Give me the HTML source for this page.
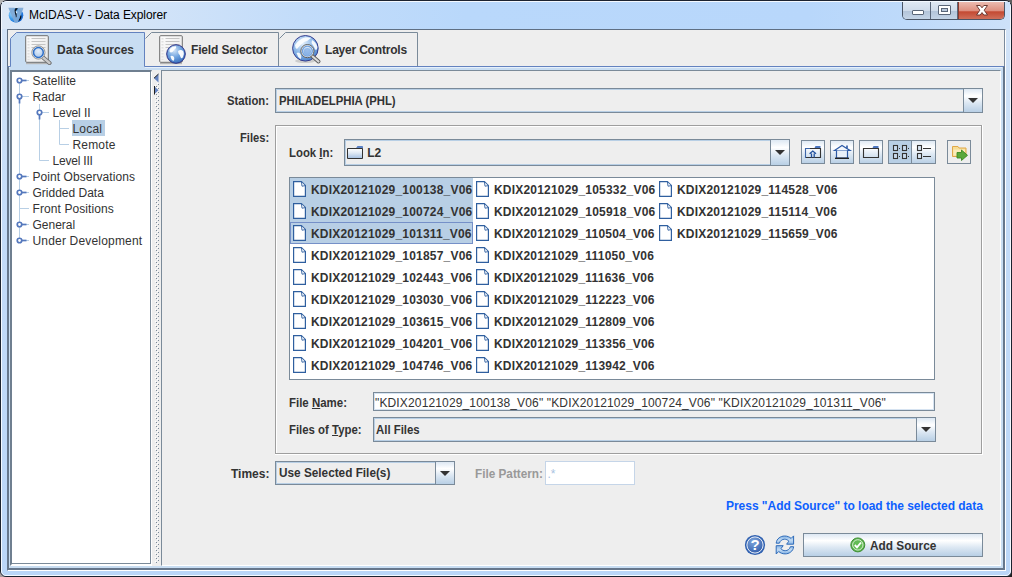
<!DOCTYPE html>
<html><head><meta charset="utf-8"><title>McIDAS-V - Data Explorer</title>
<style>
html,body{margin:0;padding:0}
body{width:1012px;height:577px;position:relative;overflow:hidden;background:#fff;font:bold 12px/14px "Liberation Sans",sans-serif;color:#333}
.a{position:absolute;box-sizing:border-box}
.t{position:absolute;white-space:nowrap;line-height:14px;height:14px;transform-origin:0 50%}
.p{font-weight:normal}
#frame{left:0;top:0;width:1012px;height:577px;border:1px solid #1c2330;border-radius:7px 7px 6px 6px;background:linear-gradient(180deg,#d4e4f7 0,#c3dbf8 40%,#bad6f8 100%)}
#tbar{left:2px;top:2px;width:1008px;height:27px;background:linear-gradient(90deg,#dce8f6 0%,#d3e4f8 14%,#c2dcfa 30%,#b9d8fb 46%,#b8d7fb 80%,#bedafa 90%,#cde1f9 100%)}
#frameHi{left:1px;top:1px;width:1010px;height:575px;border:1px solid #f4f9ff;border-radius:6px 6px 5px 5px}
#content{left:7px;top:29px;width:999px;height:542px;background:#eee;border-style:solid;border-color:#5f6f83 #fff #fff #5f6f83;border-width:1px}
.combo{border:1px solid #7a8a99;background:#eee;box-shadow:inset 1px 1px 0 #b8cfe5,inset -1px -1px 0 #b8cfe5}
.cbtn{position:absolute;right:0;top:0;bottom:0;width:18px;border-left:1px solid #7a8a99;background:linear-gradient(#dde8f3 0%,#fff 30%,#dde8f3 60%,#b8cfe5 100%)}
.cbtn:after{content:"";position:absolute;left:4px;top:var(--at,9px);border-left:5px solid transparent;border-right:5px solid transparent;border-top:5px solid #333}
.btn{border:1px solid #7a8a99;background:linear-gradient(#dde8f3 0%,#fff 30%,#dde8f3 60%,#b8cfe5 100%)}
</style></head><body>
<div class="a" style="left:0;top:0;width:8px;height:8px;background:#b4b4b4"></div><div class="a" style="right:0;top:0;width:8px;height:8px;background:#5e5e5e"></div><div class="a" style="left:0;bottom:0;width:8px;height:8px;background:#a89c9c"></div><div class="a" style="right:0;bottom:0;width:8px;height:8px;background:#222"></div>
<div class="a" id="frame"></div>
<div class="a" id="frameHi"></div>
<div class="a" id="tbar"></div>
<!-- title -->
<svg class="a" style="left:8px;top:6.5px" width="16" height="16" viewBox="0 0 16 16"><defs><radialGradient id="apg" cx="0.3" cy="0.35" r="0.8"><stop offset="0" stop-color="#b4e4fb"/><stop offset="0.5" stop-color="#3d9cec"/><stop offset="1" stop-color="#0f5fd0"/></radialGradient></defs><circle cx="8" cy="8.3" r="7.3" fill="url(#apg)"/><path d="M12.600 7.500 Q14.200 9 12.800 12 Q11.800 13.800 10 14.600 Q12 11.500 12.600 7.500 Z" fill="#0a0f18"/><path d="M0.400 0.800 H6.400 L8.100 9.500 L10 0.800 H15.400 L15.100 2.200 L9.700 15.600 H6.600 L0.900 2.200 Z" fill="#7ea9d6" opacity="0.93"/><path d="M7 1.600 Q9.600 0.300 9.800 1.800 Q8.400 3 7.800 4.400 Q9.200 7 8.600 9.800 Q7.600 11.500 7.800 9 Q7.200 7 6.800 5.500 Q6.300 3.300 7 1.600 Z" fill="#10151f"/><path d="M7.600 4.200 L9.400 4.800 L8.600 6.600 Q7.800 5.600 7.600 4.200 Z" fill="#e4f6ff"/></svg>
<div class="t p" id="title" style="left:29px;top:8px;color:#000;letter-spacing:-0.09px">McIDAS-V - Data Explorer</div>
<!-- window buttons -->
<div class="a" id="wb" style="left:902px;top:2px;width:103px;height:18px;border:1px solid #4a5566;border-top:none;border-radius:0 0 5px 5px;overflow:hidden">
 <div class="a" style="left:0;top:0;width:28px;height:19px;background:linear-gradient(#dfe8f3 0%,#cfdbea 45%,#b4c5da 50%,#c8d8ea 100%);border-right:1px solid #5a677a"></div>
 <div class="a" style="left:28px;top:0;width:27px;height:19px;background:linear-gradient(#dfe8f3 0%,#cfdbea 45%,#b4c5da 50%,#c8d8ea 100%);border-right:1px solid #5a677a"></div>
 <div class="a" style="left:55px;top:0;width:46px;height:19px;background:linear-gradient(#ecbbb0 0%,#de9080 45%,#c44a33 52%,#d27a66 100%);box-shadow:inset 1px 0 0 #8c3a2e"></div>
 <div class="a" style="left:9px;top:8px;width:12px;height:5px;background:#fff;border:1px solid #5a6678;border-radius:1px"></div>
 <div class="a" style="left:35px;top:3px;width:13px;height:10px;background:#fff;border:1px solid #5a6678;border-radius:1px"></div>
 <div class="a" style="left:38px;top:6px;width:7px;height:4px;background:#b9c8db;border:1px solid #5a6678"></div>
 <svg class="a" style="left:72px;top:3px" width="14" height="11" viewBox="0 0 14 11"><path d="M1.5 0.5 L5.2 0.5 L7 2.8 L8.800 0.5 L12.500 0.5 L9.200 5.2 L12.500 10 L8.800 10 L7 7.600 L5.200 10 L1.500 10 L4.800 5.200 Z" fill="#fff" stroke="#6d3a33" stroke-width="1"/></svg>
</div>
<div class="a" id="content"></div>
<div class="a" style="left:1004px;top:30px;width:1px;height:37px;background:#7b8a9c"></div>

<!-- tabbed pane -->
<div class="a" style="left:7px;top:66px;width:998px;height:504px;background:#c8ddf2;border-style:solid;border-color:#6382bf #66778c #66778c #66778c;border-width:1px 2px 2px 2px"></div>
<svg class="a" style="left:0;top:30px" width="1012" height="40" viewBox="0 30 1012 40">
 <path d="M10.5 67 L10.5 38.5 L16.5 32.5 L144.5 32.5 L144.5 67 Z" fill="#c8ddf2" stroke="none"/>
 <path d="M145.5 38.5 L151.5 32.5 L278.5 32.5 L278.5 66" fill="none" stroke="#7a8a99"/>
 <path d="M279.5 38.5 L285.5 32.5 L417.5 32.5 L417.5 66" fill="none" stroke="#7a8a99"/>
 <path d="M10.5 66.5 L10.5 38.5 L16.5 32.5 L144.5 32.5 L144.5 66.5" fill="none" stroke="#6382bf"/>
 <path d="M9 67.5 L10 67.5 M145 67.5 L1002 67.5" stroke="#e6f0fb" fill="none"/>
</svg>
<div class="t" style="left:57px;top:43px;letter-spacing:0.03px">Data Sources</div>
<div class="t" style="left:191px;top:43px;letter-spacing:-0.16px">Field Selector</div>
<div class="t" style="left:325px;top:43px;letter-spacing:-0.2px">Layer Controls</div>
<!-- tree panel -->
<div class="a" style="left:10px;top:70px;width:142px;height:496px;background:#fff;border-style:solid;border-color:#6f7f90 #fff #fff #6f7f90;border-width:2px 1px 2px 2px;box-shadow:inset -1px -1px 0 #7a8a99"></div>
<!-- divider -->
<div class="a" id="divider" style="left:152px;top:70px;width:9px;height:496px;background:#eee"></div>
<!-- tree -->
<svg class="a" style="left:12px;top:72px" width="138" height="180" viewBox="14 72 138 180">
<g stroke="#b8cfe5" fill="none">
<path d="M21.5 80 V240"/>
<path d="M21.5 80.5 H31 M21.5 96.5 H31 M21.5 176.5 H31 M21.5 192.5 H31 M21.5 208.5 H31 M21.5 224.5 H31 M21.5 240.5 H31"/>
<path d="M41.5 104 V160.5 H51 M41.5 112.5 H51"/>
<path d="M61.5 120 V144.5 H71 M61.5 128.5 H71"/>
</g>
<g stroke="#5578bd" stroke-width="1.7" fill="#fff">
<path d="M23.5 80.5 H28.5"/><circle cx="21.5" cy="80.5" r="2.25"/>
<path d="M21.5 98.5 V103.5"/><circle cx="21.5" cy="96.5" r="2.25"/>
<path d="M41.5 114.5 V119.5"/><circle cx="41.5" cy="112.5" r="2.25"/>
<path d="M23.5 176.5 H28.5"/><circle cx="21.5" cy="176.5" r="2.25"/>
<path d="M23.5 192.5 H28.5"/><circle cx="21.5" cy="192.5" r="2.25"/>
<path d="M23.5 224.5 H28.5"/><circle cx="21.5" cy="224.5" r="2.25"/>
<path d="M23.5 240.5 H28.5"/><circle cx="21.5" cy="240.5" r="2.25"/>
</g></svg>
<div class="a" style="left:72px;top:120px;width:33px;height:16px;background:#b8cfe5"></div>
<div class="t p" style="left:32.5px;top:74px;letter-spacing:0.1px">Satellite</div>
<div class="t p" style="left:32.5px;top:90px;letter-spacing:0.1px">Radar</div>
<div class="t p" style="left:52.5px;top:106px;letter-spacing:-0.1px">Level II</div>
<div class="t p" style="left:72.5px;top:122px;letter-spacing:0.2px">Local</div>
<div class="t p" style="left:72.5px;top:138px;letter-spacing:0.17px">Remote</div>
<div class="t p" style="left:52.5px;top:154px;letter-spacing:-0.2px">Level III</div>
<div class="t p" style="left:32.5px;top:170px;letter-spacing:0.06px">Point Observations</div>
<div class="t p" style="left:32.5px;top:186px;letter-spacing:0.0px">Gridded Data</div>
<div class="t p" style="left:32.5px;top:202px;letter-spacing:0.09px">Front Positions</div>
<div class="t p" style="left:32.5px;top:218px;letter-spacing:0.0px">General</div>
<div class="t p" style="left:32.5px;top:234px;letter-spacing:0.18px">Under Development</div>
<svg class="a" style="left:152px;top:70px" width="9" height="495" viewBox="0 0 9 495"><defs><pattern id="bump" x="3" y="3" width="4" height="4" patternUnits="userSpaceOnUse"><rect x="0" y="0" width="1" height="1" fill="#fff"/><rect x="1" y="1" width="1" height="1" fill="#7a8a99"/><rect x="2" y="2" width="1" height="1" fill="#fff"/><rect x="3" y="3" width="1" height="1" fill="#7a8a99"/></pattern></defs><rect x="3" y="3" width="4" height="490" fill="url(#bump)"/><rect x="1" y="3" width="6" height="10" fill="#eee"/><path d="M6.5 4 L6.5 12.5 L2 8.2 Z M2 16 L2 24.5 L6.5 20.2 Z" fill="#6382bf"/><path d="M6.5 4 L2 8.2 M2.5 16 V24.5" stroke="#222" fill="none"/></svg>
<!-- right panel -->
<div class="a" id="right" style="left:161px;top:70px;width:840px;height:496px;background:#eee;border-style:solid;border-width:1px;border-color:#7a8a99 #fff #fff #7a8a99"></div>
<!-- right panel content -->
<div class="t" style="left:227.3px;top:94px;transform:scaleX(0.94)">Station:</div>
<div class="a combo" style="left:275px;top:88px;width:708px;height:25px"><div class="cbtn"></div></div>
<div class="t" style="left:278.7px;top:94px;transform:scaleX(0.944)">PHILADELPHIA (PHL)</div>
<div class="t" style="left:240.3px;top:131px;transform:scaleX(0.93)">Files:</div>
<div class="a" style="left:275px;top:125px;width:708px;height:330px;border:1px solid #fff"></div>
<div class="a" style="left:275px;top:125px;width:707px;height:329px;border:1px solid #9e9e9e;box-shadow:inset 1px 1px 0 #fff"></div>
<div class="t" style="left:289px;top:146px;transform:scaleX(0.947)">Look <u>I</u>n:</div>
<div class="a combo" style="left:344px;top:139px;width:446px;height:27px;--at:10px"><div class="cbtn"></div></div>
<svg class="a" style="left:347px;top:146px" width="16" height="13" viewBox="0 0 16 13"><defs><linearGradient id="fg" x1="0" y1="0" x2="0" y2="1"><stop offset="0" stop-color="#fff"/><stop offset="0.45" stop-color="#dfe9f4"/><stop offset="1" stop-color="#a3bfe2"/></linearGradient></defs><path d="M9.500 2.500 L10.500 0.500 H15.500 V2.500 Z" fill="#5f86c9" stroke="#5a80c4" stroke-width="1"/><path d="M0.500 2.500 H15.500 V12.500 H0.500 Z" fill="url(#fg)" stroke="#333" stroke-width="1"/></svg>
<div class="t" style="left:367.2px;top:146px">L2</div>
<div class="a" style="left:289px;top:177px;width:646px;height:203px;background:#fff;border:1px solid #7a8a99"></div>
<div class="a" style="left:290px;top:178px;width:183px;height:66px;background:#b8cfe5"></div>
<div class="a" style="left:290px;top:222px;width:183px;height:22px;border:1px solid #7590c8"></div>
<svg width="0" height="0" style="position:absolute"><defs><g id="fi"><path d="M0.6 0.6 H8.4 L12.4 4.6 V15.4 H0.6 Z" fill="#fff" stroke="#2f5f9f" stroke-width="1.2"/><path d="M8.4 0.6 L12.4 4.6 L9 5.2 Z" fill="#fff" stroke="#2f5f9f" stroke-width="0.9"/></g></defs></svg>
<svg class="a" style="left:293px;top:181px" width="13" height="16"><use href="#fi"/></svg><div class="t" style="left:311px;top:183px;letter-spacing:0.2px">KDIX20121029_100138_V06</div>
<svg class="a" style="left:293px;top:203px" width="13" height="16"><use href="#fi"/></svg><div class="t" style="left:311px;top:205px;letter-spacing:0.2px">KDIX20121029_100724_V06</div>
<svg class="a" style="left:293px;top:225px" width="13" height="16"><use href="#fi"/></svg><div class="t" style="left:311px;top:227px;letter-spacing:0.2px">KDIX20121029_101311_V06</div>
<svg class="a" style="left:293px;top:247px" width="13" height="16"><use href="#fi"/></svg><div class="t" style="left:311px;top:249px;letter-spacing:0.2px">KDIX20121029_101857_V06</div>
<svg class="a" style="left:293px;top:269px" width="13" height="16"><use href="#fi"/></svg><div class="t" style="left:311px;top:271px;letter-spacing:0.2px">KDIX20121029_102443_V06</div>
<svg class="a" style="left:293px;top:291px" width="13" height="16"><use href="#fi"/></svg><div class="t" style="left:311px;top:293px;letter-spacing:0.2px">KDIX20121029_103030_V06</div>
<svg class="a" style="left:293px;top:313px" width="13" height="16"><use href="#fi"/></svg><div class="t" style="left:311px;top:315px;letter-spacing:0.2px">KDIX20121029_103615_V06</div>
<svg class="a" style="left:293px;top:335px" width="13" height="16"><use href="#fi"/></svg><div class="t" style="left:311px;top:337px;letter-spacing:0.2px">KDIX20121029_104201_V06</div>
<svg class="a" style="left:293px;top:357px" width="13" height="16"><use href="#fi"/></svg><div class="t" style="left:311px;top:359px;letter-spacing:0.2px">KDIX20121029_104746_V06</div>
<svg class="a" style="left:476px;top:181px" width="13" height="16"><use href="#fi"/></svg><div class="t" style="left:494px;top:183px;letter-spacing:0.2px">KDIX20121029_105332_V06</div>
<svg class="a" style="left:476px;top:203px" width="13" height="16"><use href="#fi"/></svg><div class="t" style="left:494px;top:205px;letter-spacing:0.2px">KDIX20121029_105918_V06</div>
<svg class="a" style="left:476px;top:225px" width="13" height="16"><use href="#fi"/></svg><div class="t" style="left:494px;top:227px;letter-spacing:0.2px">KDIX20121029_110504_V06</div>
<svg class="a" style="left:476px;top:247px" width="13" height="16"><use href="#fi"/></svg><div class="t" style="left:494px;top:249px;letter-spacing:0.2px">KDIX20121029_111050_V06</div>
<svg class="a" style="left:476px;top:269px" width="13" height="16"><use href="#fi"/></svg><div class="t" style="left:494px;top:271px;letter-spacing:0.2px">KDIX20121029_111636_V06</div>
<svg class="a" style="left:476px;top:291px" width="13" height="16"><use href="#fi"/></svg><div class="t" style="left:494px;top:293px;letter-spacing:0.2px">KDIX20121029_112223_V06</div>
<svg class="a" style="left:476px;top:313px" width="13" height="16"><use href="#fi"/></svg><div class="t" style="left:494px;top:315px;letter-spacing:0.2px">KDIX20121029_112809_V06</div>
<svg class="a" style="left:476px;top:335px" width="13" height="16"><use href="#fi"/></svg><div class="t" style="left:494px;top:337px;letter-spacing:0.2px">KDIX20121029_113356_V06</div>
<svg class="a" style="left:476px;top:357px" width="13" height="16"><use href="#fi"/></svg><div class="t" style="left:494px;top:359px;letter-spacing:0.2px">KDIX20121029_113942_V06</div>
<svg class="a" style="left:659px;top:181px" width="13" height="16"><use href="#fi"/></svg><div class="t" style="left:677px;top:183px;letter-spacing:0.2px">KDIX20121029_114528_V06</div>
<svg class="a" style="left:659px;top:203px" width="13" height="16"><use href="#fi"/></svg><div class="t" style="left:677px;top:205px;letter-spacing:0.2px">KDIX20121029_115114_V06</div>
<svg class="a" style="left:659px;top:225px" width="13" height="16"><use href="#fi"/></svg><div class="t" style="left:677px;top:227px;letter-spacing:0.2px">KDIX20121029_115659_V06</div>
<div class="t" style="left:289.4px;top:396px;transform:scaleX(0.955)">File <u>N</u>ame:</div>
<div class="a" style="left:373px;top:392px;width:562px;height:19px;background:#fff;border:1px solid #7a8a99;box-shadow:inset 0 0 0 1px #d6e3f1"></div>
<div class="t p" style="left:375px;top:396px;letter-spacing:0.145px">"KDIX20121029_100138_V06" "KDIX20121029_100724_V06" "KDIX20121029_101311_V06"</div>
<div class="t" style="left:289.4px;top:423px;transform:scaleX(0.949)">Files of <u>T</u>ype:</div>
<div class="a combo" style="left:373px;top:417px;width:563px;height:25px"><div class="cbtn"></div></div>
<div class="t" style="left:376.1px;top:423px;transform:scaleX(0.95)">All Files</div>
<div class="t" style="left:231px;top:467px;letter-spacing:0px">Times:</div>
<div class="a combo" style="left:275px;top:461px;width:180px;height:24px"><div class="cbtn"></div></div>
<div class="t" style="left:278.5px;top:466px;transform:scaleX(0.982)">Use Selected File(s)</div>
<div class="t" style="left:474.6px;top:467px;color:#999;transform:scaleX(0.98)">File Pattern:</div>
<div class="a" style="left:545px;top:461px;width:90px;height:24px;background:#fff;border:1px solid #c5d5e8"></div>
<div class="t p" style="left:547.5px;top:467px;color:#a9c3e2">.*</div>
<div class="t" style="left:726px;top:499px;color:#0d60ff;letter-spacing:-0.03px">Press "Add Source" to load the selected data</div>
<div class="a btn" style="left:803px;top:533px;width:180px;height:24px"></div>
<div class="t" style="left:870px;top:539px;transform:scaleX(0.985)">Add Source</div>
<!-- icons -->
<svg width="0" height="0" style="position:absolute"><defs>
<linearGradient id="docg" x1="0" y1="0" x2="1" y2="1"><stop offset="0" stop-color="#fdfdfd"/><stop offset="1" stop-color="#e6e6e6"/></linearGradient>
<radialGradient id="globeg" cx="0.4" cy="0.3" r="0.8"><stop offset="0" stop-color="#e6f1fc"/><stop offset="0.5" stop-color="#8db8e8"/><stop offset="1" stop-color="#3a74c4"/></radialGradient>
<radialGradient id="globes" cx="0.4" cy="0.3" r="0.8"><stop offset="0" stop-color="#d4e6f9"/><stop offset="0.5" stop-color="#6a9fdd"/><stop offset="1" stop-color="#2c62b4"/></radialGradient>
<radialGradient id="lensg" cx="0.5" cy="0.35" r="0.7"><stop offset="0" stop-color="#e4eefa"/><stop offset="1" stop-color="#a9c6ea"/></radialGradient>
<linearGradient id="btng" x1="0" y1="0" x2="0" y2="1"><stop offset="0" stop-color="#dde8f3"/><stop offset="0.3" stop-color="#fff"/><stop offset="0.6" stop-color="#dde8f3"/><stop offset="1" stop-color="#b8cfe5"/></linearGradient>
<g id="doc"><path d="M1 28.5 H23" stroke="#b5b5b5" stroke-width="1.4"/><rect x="0.7" y="0.7" width="22.6" height="26.6" rx="1" fill="url(#docg)" stroke="#6e6e6e" stroke-width="1"/><path d="M3.5 3 V25" stroke="#e0e0e0" stroke-width="2" stroke-dasharray="1.5 1.5"/><path d="M6.5 3.5 H20.5 M6.5 6.5 H20.5 M6.5 9.5 H20.5 M6.5 12.5 H20.5" stroke="#c4c4c4" stroke-width="1"/></g>
</defs></svg>
<svg class="a" style="left:25px;top:35px" width="30" height="30" viewBox="0 0 30 30"><use href="#doc"/>
<path d="M17.5 22 L24.5 28" stroke="#6b6b6b" stroke-width="4.2" stroke-linecap="round"/><path d="M17.5 22 L24.5 28" stroke="#c9c9c9" stroke-width="2.4" stroke-linecap="round"/>
<circle cx="13.4" cy="17.5" r="6.6" fill="#f4f4f4" stroke="#8a8a8a" stroke-width="0.9"/><circle cx="13.4" cy="17.5" r="4.9" fill="url(#lensg)" stroke="#2f6fc6" stroke-width="1.5"/></svg>
<svg class="a" style="left:159px;top:35px" width="30" height="30" viewBox="0 0 30 30"><use href="#doc"/>
<circle cx="17" cy="19" r="9.3" fill="url(#globes)" stroke="#2b2f85" stroke-width="1"/>
<path d="M10.5 14.5 Q13 11 17 11.2 Q18 13 15.5 14.5 Q14 17 12 17.5 Q10 17 10.5 14.5 Z M11.5 21 Q13.5 20 15 22 Q16 24.5 14.5 26 Q12 25 11.5 21 Z M19 16 Q22 14 24.5 16.5 Q25.5 19 24 22 Q22.5 24.5 21.5 22 Q21 19.5 19.5 18.5 Z" fill="#fff" opacity="0.95"/></svg>
<svg class="a" style="left:291px;top:34px" width="32" height="32" viewBox="0 0 32 32">
<ellipse cx="14" cy="27" rx="10" ry="2" fill="#bdbdbd" opacity="0.7"/>
<circle cx="14.4" cy="14.3" r="12.8" fill="url(#globeg)" stroke="#2b2f85" stroke-width="0.9"/>
<path d="M4 11 Q8 5 14 3.5 Q17 3 20 4 Q17 7 13 8 Q9 11 6 15 Q4 14 4 11 Z M5.5 19 Q8 17.5 9.5 20 Q11 23.5 9.5 25 Q6.5 23 5.5 19 Z M21 6 Q25 8 26.5 13 Q25.5 18 24 15 Q22 11 20.5 9 Z" fill="#fff" opacity="0.9"/>
<path d="M20.5 21.5 L27.5 27.5" stroke="#5a5a5a" stroke-width="4" stroke-linecap="round"/><path d="M20.5 21.5 L27.5 27.5" stroke="#dadada" stroke-width="2.2" stroke-linecap="round"/>
<circle cx="16.4" cy="17.1" r="6.6" fill="#eee" stroke="#555" stroke-width="0.9"/><circle cx="16.4" cy="17.1" r="5" fill="url(#lensg)" stroke="#6fa0de" stroke-width="1.2"/><circle cx="16.4" cy="17.6" r="3.6" fill="#5f98de" opacity="0.55"/></svg>
<svg class="a" style="left:801px;top:140px" width="171" height="24" viewBox="0 0 171 24"><rect x="0.5" y="0.5" width="23" height="23" fill="url(#btng)" stroke="#7a8a99"/><rect x="29.5" y="0.5" width="23" height="23" fill="url(#btng)" stroke="#7a8a99"/><rect x="58.5" y="0.5" width="23" height="23" fill="url(#btng)" stroke="#7a8a99"/><rect x="87.5" y="0.5" width="23" height="23" fill="#b8cfe5" stroke="#7a8a99"/><rect x="110.5" y="0.5" width="24" height="23" fill="url(#btng)" stroke="#7a8a99"/><rect x="146.5" y="0.5" width="23" height="23" fill="#eee" stroke="#7a8a99"/><path d="M4.5 8.5 H19.5 V17.5 H4.5" fill="none" stroke="#333" stroke-width="1.1"/><path d="M4.5 18 V8.5 H9" fill="none" stroke="#3b64a8" stroke-width="1.1"/><path d="M14.5 6 H19.5 V8 H13.5 Z" fill="#4a74be"/><path d="M8.6 13.8 L11.8 11 L15 13.8 M10.5 13.5 V17.5 M13.2 13.5 V17.5" fill="none" stroke="#23529e" stroke-width="1.3"/><path d="M33.5 10.5 L41 5.5 L49 10.5 Z" fill="#f4f8fc" stroke="#2d5aa6" stroke-width="1.2" stroke-linejoin="miter"/><path d="M46 5.5 V8.5" stroke="#2d5aa6" stroke-width="1.6"/><path d="M35.5 10.5 V18 H46.5 V10.5" fill="#eaf1f9" stroke="#2d5aa6" stroke-width="1.2"/><path d="M34 18.3 H48" stroke="#222" stroke-width="1.4"/><path d="M62.5 8.5 H77.5 V17.5 H62.5 Z" fill="none" stroke="#333" stroke-width="1.1"/><path d="M72.5 6 H77.5 V8 H71.5 Z" fill="#4a74be"/><rect x="92.5" y="5.5" width="4" height="5" fill="#c9dbee" stroke="#333" stroke-width="1.1"/><rect x="98" y="8" width="1" height="1" fill="#333"/><rect x="101.5" y="5.5" width="4" height="5" fill="#c9dbee" stroke="#333" stroke-width="1.1"/><rect x="107" y="8" width="1" height="1" fill="#333"/><rect x="92.5" y="13.5" width="4" height="5" fill="#c9dbee" stroke="#333" stroke-width="1.1"/><rect x="98" y="16" width="1" height="1" fill="#333"/><rect x="101.5" y="13.5" width="4" height="5" fill="#c9dbee" stroke="#333" stroke-width="1.1"/><rect x="107" y="16" width="1" height="1" fill="#333"/><rect x="116.5" y="5.5" width="4" height="5" fill="#dbe7f4" stroke="#333" stroke-width="1.1"/><path d="M122 8.5 H130" stroke="#333" stroke-width="1"/><rect x="116.5" y="13.5" width="4" height="5" fill="#dbe7f4" stroke="#333" stroke-width="1.1"/><path d="M122 16.5 H130" stroke="#333" stroke-width="1"/><path d="M151.500 6.500 H157 L158 8 H165 V16.500 H151.500 Z" fill="#f7dd95" stroke="#e0a848" stroke-width="1"/><path d="M152.500 9.500 H164 V15.500 H152.500 Z" fill="#fbebb8"/><path d="M156 12.500 H160.500 V10 L166.500 15.300 L160.500 20.500 V18 H156 Z" fill="#5aa83a" stroke="#3c8a22" stroke-width="0.9"/></svg>
<svg class="a" style="left:744px;top:534px" width="22" height="22" viewBox="0 0 22 22"><defs><radialGradient id="hg" cx="0.4" cy="0.3" r="0.8"><stop offset="0" stop-color="#7fa6dc"/><stop offset="1" stop-color="#2c58a8"/></radialGradient></defs><circle cx="11" cy="11" r="10.1" fill="#2f60b0"/><circle cx="11" cy="11" r="8.1" fill="url(#hg)" stroke="#fff" stroke-width="0.9"/><text x="11" y="16.4" text-anchor="middle" font-family="Liberation Sans, sans-serif" font-weight="bold" font-size="15" fill="#fff">?</text></svg>
<svg class="a" style="left:775px;top:535px" width="20" height="20" viewBox="0 0 20 20"><defs><linearGradient id="rfg" x1="0" y1="0" x2="0" y2="1"><stop offset="0" stop-color="#7fb0e4"/><stop offset="0.5" stop-color="#c3dbf3"/><stop offset="1" stop-color="#8ab6e6"/></linearGradient><path id="rfa" d="M1.2 8.2 C1.5 3.6 5.8 1 9.6 1 C12.4 1 14.6 2 16.1 3.4 L18.6 0.9 V9.2 H11.6 L13.9 6.2 C12.6 4.8 11.2 4.2 9.6 4.2 C7.2 4.2 5.2 5.6 4.4 8.2 Z"/></defs><g fill="url(#rfg)" stroke="#2f6bb8" stroke-width="1" stroke-linejoin="round"><use href="#rfa"/><use href="#rfa" transform="rotate(180 9.9 9.95)"/></g></svg>
<svg class="a" style="left:850px;top:537px" width="16" height="16" viewBox="0 0 16 16"><circle cx="7.800" cy="7.900" r="7" fill="#58b04a" stroke="#3f8f35" stroke-width="1"/><circle cx="7.800" cy="7.900" r="5.200" fill="#63bb55" stroke="#d8f0d2" stroke-width="1"/><path d="M4.800 8 L7 10.300 L11 5.500" fill="none" stroke="#fff" stroke-width="1.900"/></svg>
</body></html>
